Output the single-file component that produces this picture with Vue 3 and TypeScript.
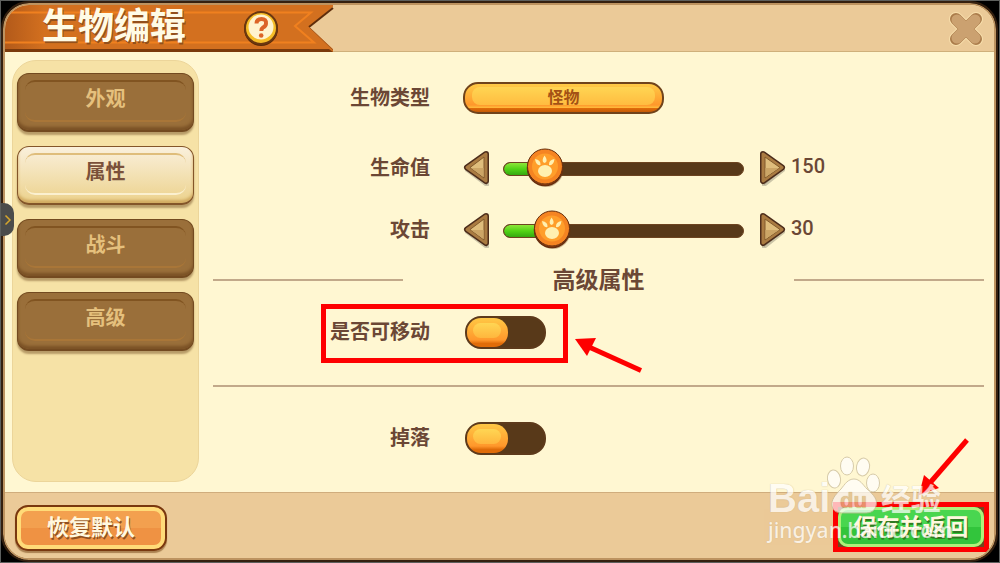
<script setup lang="ts">
import { ref } from 'vue'

interface Stat { id: string; label: string; value: number; max: number }
interface Toggle { id: string; label: string; on: boolean; marked: boolean }

const tabs = ['外观', '属性', '战斗', '高级']
const activeTab = ref('属性')
const creatureType = ref('怪物')
const stats = ref<Stat[]>([
  { id: 'hp', label: '生命值', value: 150, max: 862 },
  { id: 'attack', label: '攻击', value: 30, max: 148 },
])
const toggles = ref<Toggle[]>([
  { id: 'movable', label: '是否可移动', on: false, marked: true },
  { id: 'drop', label: '掉落', on: false, marked: false },
])

const percent = (s: Stat) => `${(s.value / s.max) * 100}%`
const step = (s: Stat, by: number) => {
  s.value = Math.min(s.max, Math.max(0, s.value + by))
}
const reset = () => {
  stats.value[0].value = 150
  stats.value[1].value = 30
}
</script>

<template>
  <div class="screen">
    <div class="window">
      <header class="header">
        <div class="ribbon">
          <svg class="ribbon-art" viewBox="0 0 330 47" aria-hidden="true">
            <defs>
              <linearGradient id="ribbonFill" x1="0" x2="1" y1="0" y2="0">
                <stop offset="0" stop-color="#b35a1a" />
                <stop offset="0.12" stop-color="#d3701f" />
                <stop offset="1" stop-color="#d3701f" />
              </linearGradient>
            </defs>
            <path d="M0 0H328V2L304 22L328 44V47H0Z" fill="url(#ribbonFill)" />
            <path d="M0 44H324L328 47H0Z" fill="#7a3a0c" />
            <path d="M0 7.500H306L290 21L309 37.500H0" fill="none" stroke="#f0801f" stroke-width="2" />
            <path d="M328 3L304 22" stroke="#5e2d0b" stroke-width="2" />
            <path d="M304 22L328 45" stroke="#a75a20" stroke-width="1" />
          </svg>
          <h1>生物编辑</h1>
          <button class="help" type="button" aria-label="帮助">
            <svg viewBox="0 0 38 38" aria-hidden="true">
              <circle cx="19" cy="20" r="17" fill="#5c2b08" />
              <circle cx="19" cy="19" r="16" fill="#f5bd27" stroke="#6b3810" stroke-width="2" />
              <circle cx="19" cy="18" r="12.500" fill="#fff3cf" />
              <path d="M14.500 14.500Q14.500 10 19.500 10T24 14.500Q24 17 21 18.500Q19.300 19.500 19.300 22" fill="none" stroke="#dc6428" stroke-width="4" />
              <circle cx="19.200" cy="26.500" r="2.300" fill="#dc6428" />
            </svg>
          </button>
        </div>
        <button class="close" type="button" aria-label="关闭">
          <svg viewBox="0 0 38 38" aria-hidden="true">
            <path d="M9 9L29 29M29 9L9 29" stroke="#f8dfac" stroke-width="14" stroke-linecap="round" />
            <path d="M9 9L29 29M29 9L9 29" stroke="#aa7b4a" stroke-width="12" stroke-linecap="round" />
            <path d="M10 10L28 28M28 10L10 28" stroke="#cba170" stroke-width="11" stroke-linecap="round" />
          </svg>
        </button>
      </header>

      <div class="body">
        <nav class="sidebar" aria-label="分类">
          <button
            v-for="tab in tabs"
            :key="tab"
            type="button"
            class="tab"
            :class="{ active: tab === activeTab }"
            @click="activeTab = tab"
          >{{ tab }}</button>
        </nav>

        <main class="panel">
          <div class="row type-row">
            <span id="type-label" class="label">生物类型</span>
            <button class="type" type="button" aria-labelledby="type-label"><span>{{ creatureType }}</span></button>
          </div>

          <div v-for="s in stats" :key="s.id" class="row stat-row">
            <label class="label" :for="s.id">{{ s.label }}</label>
            <div class="stat">
              <button class="arrow" type="button" aria-label="减少" @click="step(s, -1)">
                <svg viewBox="0 0 28 36" aria-hidden="true">
                  <path d="M24 4L4 18L24 33Z" transform="translate(0 2)" fill="#00000033" stroke="#00000033" stroke-width="4" stroke-linejoin="round" />
                  <path d="M23 4L4 17.500L23 31Z" fill="#4d2d1b" stroke="#4d2d1b" stroke-width="6" stroke-linejoin="round" />
                  <path d="M23 4L4 17.500L23 31Z" fill="#aa7b42" stroke="#aa7b42" stroke-width="3" stroke-linejoin="round" />
                  <path d="M21 7L7 17.500L21 28Z" fill="#dfbd7c" stroke="#825b2c" stroke-width="1" stroke-linejoin="round" />
                  <path d="M8 18H20.500V27Z" fill="#cca566" />
                </svg>
              </button>
              <div class="slider">
                <div class="track"><div class="fill" :style="{ width: percent(s) }"></div></div>
                <svg class="thumb" viewBox="0 0 38 40" :style="{ left: percent(s) }" aria-hidden="true">
                  <circle cx="20" cy="21.500" r="17.500" fill="#6b3b1255" />
                  <circle cx="19" cy="20" r="17.500" fill="#b54a0b" stroke="#672f10" stroke-width="1.500" />
                  <circle cx="19" cy="18.500" r="17.500" fill="#f58422" stroke="#672f10" stroke-width="1" />
                  <circle cx="19" cy="18.500" r="13" fill="#ff9e2a" />
                  <ellipse cx="19" cy="23" rx="7" ry="6" fill="#fff0b0" />
                  <path d="M9 11Q15 12 14.500 17Q10 18 9 11Z" fill="#fff0b0" />
                  <path d="M18.500 7.500Q23 13.500 18.500 15Q14.500 13.500 18.500 7.500Z" fill="#fff0b0" />
                  <path d="M28.500 11Q22.500 12 23 17Q27.500 18 28.500 11Z" fill="#fff0b0" />
                </svg>
                <input :id="s.id" v-model.number="s.value" type="range" min="0" :max="s.max">
              </div>
              <button class="arrow next" type="button" aria-label="增加" @click="step(s, 1)">
                <svg viewBox="0 0 28 36" aria-hidden="true">
                  <path d="M4 4L23 18L4 33Z" transform="translate(1 2)" fill="#00000033" stroke="#00000033" stroke-width="4" stroke-linejoin="round" />
                  <path d="M4 4L23 17.500L4 31Z" fill="#4d2d1b" stroke="#4d2d1b" stroke-width="6" stroke-linejoin="round" />
                  <path d="M4 4L23 17.500L4 31Z" fill="#aa7b42" stroke="#aa7b42" stroke-width="3" stroke-linejoin="round" />
                  <path d="M6 7L21 17.500L6 28Z" fill="#dfbd7c" stroke="#825b2c" stroke-width="1" stroke-linejoin="round" />
                  <path d="M6.500 18H20L6.500 27Z" fill="#cca566" />
                </svg>
              </button>
              <output class="value" :for="s.id">{{ s.value }}</output>
            </div>
          </div>

          <div class="section">
            <span class="rule"></span>
            <h2>高级属性</h2>
            <span class="rule"></span>
          </div>

          <template v-for="(t, i) in toggles" :key="t.id">
            <hr v-if="i > 0" class="divider">
            <div class="row">
              <label class="label" :for="t.id">{{ t.label }}</label>
              <div class="switch-cell">
                <span class="switch">
                  <input :id="t.id" v-model="t.on" type="checkbox" role="switch">
                  <span class="knob"></span>
                </span>
                <template v-if="t.marked">
                  <span class="mark mark-row"></span>
                  <svg class="pointer-row" viewBox="0 0 70 36" aria-hidden="true">
                    <path d="M15 9L67 32.500" stroke="#fe0000" stroke-width="5" />
                    <path d="M1 1L22 0L13 18Z" fill="#fe0000" />
                  </svg>
                </template>
              </div>
            </div>
          </template>
        </main>
      </div>

      <footer class="footer">
        <button class="action restore" type="button" @click="reset">恢复默认</button>
        <div class="save-box">
          <button class="action save" type="button">保存并返回</button>
          <span class="mark mark-save"></span>
          <svg class="pointer-save" viewBox="0 0 54 62" aria-hidden="true">
            <path d="M50 2L12 46" stroke="#fe0000" stroke-width="5" />
            <path d="M2 57L7 37L22 50Z" fill="#fe0000" />
          </svg>
          <div class="watermark" aria-hidden="true">
            <div class="brand">
              <span class="bai">Bai</span>
              <svg class="paw" viewBox="0 0 54 58">
                <g fill="#fff" stroke="#c9bb9a" stroke-width="1">
                  <ellipse cx="7" cy="23" rx="6.500" ry="9" transform="rotate(-8 7 23)" />
                  <ellipse cx="20" cy="10" rx="6.500" ry="9" />
                  <ellipse cx="36" cy="11" rx="6.500" ry="9" transform="rotate(10 36 11)" />
                  <ellipse cx="46" cy="27" rx="6.500" ry="9" />
                  <path d="M27 23C33 23 36 29 40 33C47 39 51 44 49 50C47 57 41 57 36 57H17C11 57 6 56 5 50C4 44 8 39 14 33C18 28 21 23 27 23Z" />
                </g>
                <text x="13" y="52" class="du">du</text>
              </svg>
              <span class="jingyan">经验</span>
            </div>
            <div class="site">jingyan.baidu.com</div>
          </div>
        </div>
      </footer>
    </div>
    <button class="handle" type="button" aria-label="展开">
      <svg viewBox="0 0 8 12" aria-hidden="true"><path d="M1.500 1.500L6 6L1.500 10.500" fill="none" stroke="#d5a62c" stroke-width="1.500" /></svg>
    </button>
  </div>
</template>

<style>
body { margin: 0; background: #000; }
</style>

<style scoped>
* { box-sizing: border-box; }
button { border: 0; padding: 0; background: none; font: inherit; color: inherit; cursor: pointer; }
svg { display: block; }

.screen {
  position: relative;
  display: flex;
  min-height: 100vh;
  padding: 2px 3px 2px 2px;
  background: #000;
  border: 1px solid #5d5f5d;
  color: #6b4735;
  font-family: "Noto Sans CJK SC", "Noto Sans", sans-serif;
  font-weight: 700;
  font-size: 20px;
  line-height: 28px;
}
.window {
  flex: 1;
  display: flex;
  flex-direction: column;
  border: 2px solid #bd9360;
  border-radius: 26px;
  outline: 2px solid #35200f;
  background: #fff7d2;
  overflow: hidden;
}
.header {
  display: flex;
  justify-content: space-between;
  height: 46px;
  background: #ebca98;
  box-shadow: 0 1px #cfb07b;
}
.ribbon {
  position: relative;
  display: flex;
  align-items: flex-start;
  width: 328px;
  padding-left: 37px;
}
.ribbon-art { position: absolute; left: 0; top: 0; width: 330px; height: 47px; }
h1 {
  position: relative;
  margin: 0;
  font-size: 36px;
  line-height: 36px;
  color: #fffbe6;
  text-shadow: 1px 2px #93501c;
}
.help { position: relative; width: 38px; height: 38px; margin: 4px 0 0 56px; }
.help svg { width: 38px; height: 38px; }
.close { width: 38px; height: 38px; margin: 5px 9px 0 0; }

.body { flex: 1; display: flex; padding: 9px 10px 10px 7px; }
.sidebar {
  flex: none;
  display: flex;
  flex-direction: column;
  gap: 14px;
  width: 187px;
  padding: 12px 4px;
  border: 1px solid #ecd59a;
  border-radius: 24px;
  background: #f6e2a6;
}
.tab {
  position: relative;
  height: 59px;
  padding-bottom: 8px;
  border: 1px solid #734a20;
  border-bottom-width: 2px;
  border-radius: 12px;
  background: #9a6f3a;
  box-shadow: inset 0 -3px 3px #7b5226, 0 3px 2px #b79b68;
  color: #e5c07d;
}
.tab::before {
  content: "";
  position: absolute;
  inset: 6px 7px 8px;
  border: solid transparent;
  border-width: 2px 0;
  border-top-color: #815421;
  border-bottom-color: #a97638;
  border-radius: 10px;
}
.tab.active {
  border-color: #835529;
  background: linear-gradient(#faf0dc, #ecd28c);
  box-shadow: inset 0 -3px 3px #d1aa61, 0 3px 2px #b79b68;
  color: #7b513a;
}
.tab.active::before { border-top-color: #dfbd7b; border-bottom-color: #fbf0cf; }

.panel { flex: 1; min-width: 0; padding: 16px 0 0 14px; }
.row {
  display: grid;
  grid-template-columns: 5fr 12fr;
  column-gap: 33px;
  align-items: center;
  height: 44px;
}
.label { padding-bottom: 2px; text-align: right; white-space: nowrap; }
.type-row { margin-bottom: 26px; }
.stat-row { margin-bottom: 18px; }
.type {
  width: 201px;
  height: 32px;
  padding: 3px 7px 7px;
  border: 2px solid #70431b;
  border-radius: 15px;
  background: linear-gradient(#ffcb47, #ff972b 75%, #ffb73a 84%, #e06c09 86%, #c55b06);
  color: #a35115;
  font-size: 16px;
  line-height: 18px;
}
.type span { display: block; border-radius: 8px; background: linear-gradient(#ffd553, #ffbc40); }

.stat { display: flex; align-items: center; }
.arrow { flex: none; width: 28px; height: 36px; }
.arrow svg { width: 28px; height: 36px; }
.slider { position: relative; flex: 1; min-width: 60px; height: 40px; margin: 0 15px 0 12px; }
.track {
  height: 14px;
  margin-top: 14px;
  border: 1px solid #6d4420;
  border-radius: 7px;
  background: #583919;
  overflow: hidden;
}
.fill { height: 12px; background: linear-gradient(#8ee53a, #51d316 50%, #35a811); border-radius: 6px 0 0 6px; }
.thumb { position: absolute; top: 0; width: 38px; height: 40px; margin-left: -19px; }
.slider input { position: absolute; inset: 0; width: 100%; height: 100%; margin: 0; opacity: 0; cursor: pointer; }
.value { flex: none; width: 193px; margin-left: 4px; padding-bottom: 4px; font-family: Roboto, "Noto Sans", sans-serif; font-weight: 500; }

.section { display: grid; grid-template-columns: 190px 1fr 190px; align-items: center; height: 32px; margin: -6px 0 14px; }
.rule { height: 2px; background: #c2a98a; }
h2 { margin: 0; padding-bottom: 4px; text-align: center; font-size: 23px; line-height: 28px; }
.divider { height: 2px; margin: 31px 0 29px; border: 0; background: #c2a98a; }

.switch-cell { position: relative; padding-left: 2px; }
.switch { position: relative; display: block; width: 81px; height: 33px; }
.switch input {
  appearance: none;
  display: block;
  width: 81px;
  height: 33px;
  margin: 0;
  border: 2px solid #5d3a1b;
  border-radius: 16px;
  background: #583919;
  cursor: pointer;
}
.knob {
  position: absolute;
  left: 2px;
  top: 2px;
  width: 41px;
  height: 29px;
  border-radius: 14px;
  background: linear-gradient(#ffc845, #ff972b 76%, #e06c09 88%);
  pointer-events: none;
}
.knob::before { content: ""; position: absolute; inset: 5px 7px 9px 6px; border-radius: 8px; background: linear-gradient(#ffd654, #ffb63d); }
.switch input:checked + .knob { left: 38px; }

.mark { position: absolute; border: 5px solid #fe0000; pointer-events: none; }
.mark-row { left: -142px; top: -12px; width: 247px; height: 59px; }
.pointer-row { position: absolute; left: 111px; top: 22px; width: 70px; height: 36px; }

.footer {
  display: flex;
  justify-content: space-between;
  align-items: flex-start;
  height: 66px;
  padding: 9px 5px 0 10px;
  border-top: 1px solid #d0ad7d;
  background: #ebca98;
}
.action { text-align: center; white-space: nowrap; color: #fff8df; }
.restore {
  width: 152px;
  height: 46px;
  margin-top: 3px;
  padding-bottom: 6px;
  border: 2px solid #79380f;
  border-radius: 13px;
  background: linear-gradient(#f3a04f 50%, #ef9243 50%);
  box-shadow: inset 0 0 0 4px #ffdb78, 0 2px 1px #aa8050;
  font-size: 22px;
  text-shadow: 1px 2px #91501f;
}
.save-box { position: relative; width: 156px; height: 50px; padding: 5px; background: #73451d; }
.save {
  width: 146px;
  height: 40px;
  padding-bottom: 5px;
  border-radius: 10px;
  background: linear-gradient(#49d650 50%, #32c53c 50%);
  box-shadow: inset 0 0 0 3px #b0f07b;
  font-size: 23px;
  text-shadow: 1px 2px #317a20;
}
.mark-save { inset: 0; }
.pointer-save { position: absolute; right: 18px; bottom: 52px; width: 54px; height: 62px; }

.watermark { position: absolute; right: 39px; bottom: 8px; width: 182px; color: #fff; opacity: 0.72; pointer-events: none; }
.brand { display: flex; align-items: flex-end; height: 58px; text-shadow: 0 0 1px #b39e72; }
.bai { width: 59px; font: 700 40px/32px "Liberation Sans", Arial, sans-serif; }
.paw { flex: none; width: 54px; height: 58px; }
.du { font: 700 22px "Liberation Sans", Arial, sans-serif; fill: #e4c593; }
.jingyan { font-size: 30px; line-height: 34px; }
.site { padding-top: 2px; font: 500 21px/28px "Noto Sans", sans-serif; text-shadow: 0 0 1px #b39e72; }

.handle {
  position: absolute;
  left: 0;
  top: 202px;
  display: grid;
  place-items: center;
  width: 13px;
  height: 33px;
  border-radius: 0 10px 10px 0;
  background: #4b4c4b;
}
.handle svg { width: 8px; height: 12px; }
</style>
